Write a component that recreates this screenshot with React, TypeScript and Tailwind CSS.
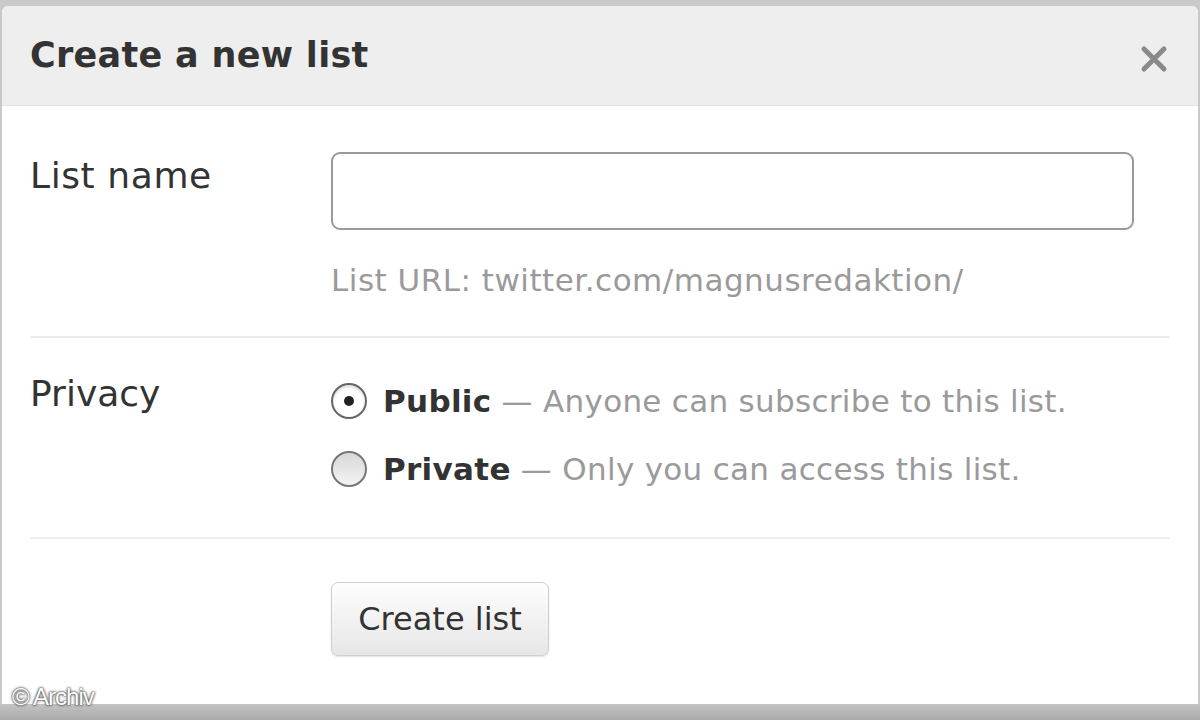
export default function App() {
  return (
    <div
      className="relative w-[1200px] h-[720px] flex flex-col bg-[#c9c9c9] overflow-hidden"
      style={{ fontFamily: '"DejaVu Sans", "Noto Sans", sans-serif' }}
    >
      <div className="mt-[6px] mx-[2px] flex-1 flex flex-col bg-white rounded-t-[6px] overflow-hidden">
        {/* header */}
        <div className="h-[100px] shrink-0 bg-[#eeeeee] border-b border-[#e2e2e2] flex items-center justify-between pl-[28px] pr-[30px]">
          <h1 className="text-[35px] font-bold text-[#333333] tracking-[0.3px]">Create a new list</h1>
          <svg width="28" height="28" viewBox="0 0 28 28" className="mt-[6px]">
            <path d="M4 4 L24 24 M24 4 L4 24" stroke="#8a8a8a" strokeWidth="5" strokeLinecap="round" />
          </svg>
        </div>

        {/* body */}
        <div className="flex-1 flex flex-col px-[28px]">
          <div className="flex pt-[46px] pb-[38px] border-b-2 border-[#ececec]">
            <div className="w-[301px] shrink-0 mt-[3px] text-[36px] leading-[42px] text-[#333333] tracking-[0.6px]">List name</div>
            <div className="flex-1 flex flex-col">
              <input
                className="h-[78px] w-[803px] rounded-[9px] border-2 border-[#9a9a9a] bg-white outline-none"
                type="text"
              />
              <div className="mt-[32px] text-[31px] leading-[36px] text-[#9a9a9a] tracking-[0.5px]">
                List URL: twitter.com/magnusredaktion/
              </div>
            </div>
          </div>

          <div className="flex pt-[35px] pb-[48px] border-b-2 border-[#ececec]">
            <div className="w-[301px] shrink-0 text-[36px] leading-[42px] text-[#333333]">Privacy</div>
            <div className="flex-1 flex flex-col gap-[28px] pt-[8px]">
              <label className="h-[40px] flex items-center gap-[16px]">
                <span className="w-[36px] h-[36px] rounded-full border-2 border-[#666] bg-white flex items-center justify-center shadow-[inset_0_2px_3px_rgba(0,0,0,0.15)]">
                  <span className="w-[10px] h-[10px] rounded-full bg-[#222]" />
                </span>
                <span className="text-[31px] text-[#9a9a9a] tracking-[0.3px]">
                  <span className="font-bold text-[#333333]">Public</span> — Anyone can subscribe to this list.
                </span>
              </label>
              <label className="h-[40px] flex items-center gap-[16px]">
                <span className="w-[36px] h-[36px] rounded-full border-2 border-[#777] bg-gradient-to-b from-[#d8d8d8] to-[#f4f4f4]" />
                <span className="text-[31px] text-[#9a9a9a] tracking-[0.3px]">
                  <span className="font-bold text-[#333333]">Private</span> — Only you can access this list.
                </span>
              </label>
            </div>
          </div>

          <div className="flex pt-[43px]">
            <div className="w-[301px] shrink-0" />
            <button className="h-[74px] w-[218px] rounded-[7px] border border-[#cfcfcf] bg-gradient-to-b from-[#fefefe] to-[#e6e6e6] text-[32px] text-[#333333] shadow-[0_1px_2px_rgba(0,0,0,0.12)]">
              Create list
            </button>
          </div>
        </div>
      </div>
      <div className="h-[16px] shrink-0 bg-gradient-to-b from-[#c4c4c4] to-[#a9a9a9]" />

      <div
        className="absolute left-[12px] bottom-[9px] text-[24px] leading-[28px] text-white tracking-[-1px]"
        style={{ fontFamily: '"Liberation Sans", Arial, sans-serif', textShadow: '0 0 3px #333, 0 0 2px #333' }}
      >
        © Archiv
      </div>
    </div>
  );
}
